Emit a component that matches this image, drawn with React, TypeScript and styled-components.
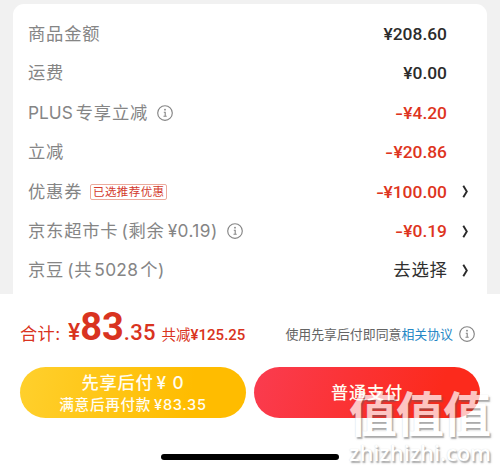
import React from 'react';
import styled, { createGlobalStyle } from 'styled-components';

const GlobalStyle = createGlobalStyle`
  * { box-sizing: border-box; }
  body { margin: 0; background: #fff; font-family: Inter, "Noto Sans CJK SC", sans-serif; }
`;

const Screen = styled.main`
  position: relative;
  width: 500px;
  height: 470px;
  overflow: hidden;
  display: flex;
  flex-direction: column;
  background: #fff;
`;

const Backdrop = styled.section`
  height: 294px;
  padding: 4px 13px 0;
  background: #f1f1f1;
`;

const Card = styled.div`
  height: 290px;
  padding: 10.4px 15px 0;
  border-radius: 11px 11px 0 0;
  background: #fff;
`;

const Row = styled.div`
  height: 39.4px;
  display: flex;
  align-items: center;
  white-space: nowrap;
  line-height: 24px;
`;

const Label = styled.div`
  display: flex;
  align-items: center;
  flex: 1;
  color: #858585;
  font-size: 17.3px;
`;

const Run = styled.span<{ $gap?: number; $ls?: number; $size?: number }>`
  margin-left: ${p => p.$gap ?? 0}px;
  letter-spacing: ${p => p.$ls ?? 0.8}px;
  font-size: ${p => (p.$size ? `${p.$size}px` : 'inherit')};
`;

const Price = styled.span<{ $red?: boolean }>`
  display: flex;
  color: ${p => (p.$red ? '#de3420' : '#2b2b2b')};
  font-family: Roboto, sans-serif;
  font-size: 17.4px;
  font-weight: 500;
`;

const Minus = styled.span`
  transform: scaleX(1.3);
  transform-origin: right;
`;

const Choice = styled.span`
  color: #2f2f2f;
  font-size: 17.4px;
  letter-spacing: 0.8px;
  margin-right: -0.8px;
`;

const Trail = styled.span`
  width: 25px;
  display: flex;
  padding-left: 15px;
`;

const Tag = styled.span`
  width: 77px;
  height: 16px;
  margin-left: 8px;
  display: flex;
  align-items: center;
  justify-content: center;
  border: 1px solid #ecaa9c;
  border-radius: 2px;
  color: #d3392b;
  font-size: 11.5px;
  letter-spacing: 0.4px;
`;

const InfoSvg = styled.svg<{ $gap: number }>`
  flex: none;
  margin-left: ${p => p.$gap}px;
`;

const Summary = styled.section`
  height: 73px;
  padding: 0 25px 0 20px;
  display: flex;
  justify-content: space-between;
  white-space: nowrap;
`;

const Total = styled.div`
  display: flex;
  align-items: baseline;
  color: #d93320;
  line-height: 67px;
`;

const Money = styled.span<{ $size: number; $weight?: number; $ls?: number; $gap?: number }>`
  font-family: Roboto, sans-serif;
  font-size: ${p => p.$size}px;
  font-weight: ${p => p.$weight ?? 500};
  letter-spacing: ${p => p.$ls ?? 0}px;
  margin-left: ${p => p.$gap ?? 0}px;
`;

const Terms = styled.div`
  height: 79px;
  display: flex;
  align-items: center;
  color: #646464;
  font-size: 12.9px;
`;

const Link = styled.span`
  color: #2587c5;
`;

const Actions = styled.div`
  display: flex;
  gap: 8px;
  padding-left: 20px;
`;

const PayButton = styled.button<{ $bg: string }>`
  width: 226px;
  height: 51px;
  padding: 0;
  border: 0;
  border-radius: 26px;
  display: flex;
  flex-direction: column;
  align-items: center;
  justify-content: center;
  background: ${p => p.$bg};
  color: #fffdf2;
  font-family: inherit;
  font-weight: 500;
  white-space: nowrap;
`;

const Line = styled.span<{ $size: number; $h: number }>`
  font-size: ${p => p.$size}px;
  line-height: ${p => p.$h}px;
  display: flex;
`;

const HomeBar = styled.div`
  width: 178px;
  height: 6px;
  margin: 35.5px 0 0 161px;
  border-radius: 3px;
  background: #000;
`;

const Watermark = styled.div`
  position: absolute;
  left: 349px;
  top: 384px;
  display: flex;
  flex-direction: column;
  white-space: nowrap;
  color: #fff;
  opacity: 0.72;
  text-shadow: 1.5px 1.5px 1.5px rgba(90, 90, 90, 0.7), 0 0 1px rgba(120, 120, 120, 0.4);
`;

const MarkName = styled.span`
  font-family: "Noto Sans CJK SC", sans-serif;
  font-size: 48px;
  font-weight: 700;
  line-height: 54px;
  letter-spacing: -1px;
`;

const MarkSite = styled.span`
  font-family: "Open Sans", sans-serif;
  font-size: 22px;
  font-weight: 600;
  line-height: 28px;
  letter-spacing: -0.1px;
`;

const Info = ({ gap }: { gap: number }) => (
  <InfoSvg $gap={gap} width="16" height="16" viewBox="0 0 16 16" fill="none" stroke="#858585">
    <circle cx="8" cy="8" r="7.3" strokeWidth="1.15" />
    <path d="M6.8 7.2H8.2V11M6.5 11.2H9.7" strokeWidth="1.1" />
    <circle cx="8" cy="4.7" r="0.9" fill="#858585" stroke="none" />
  </InfoSvg>
);

const Chevron = () => (
  <svg width="7" height="13" viewBox="0 0 7 13" fill="none">
    <path d="M1.3 .8L4.8 6.5L1.3 12.2" stroke="#292929" strokeWidth="1.9" />
  </svg>
);

const End = ({ arrow }: { arrow?: boolean }) => <Trail>{arrow && <Chevron />}</Trail>;

const Discount = ({ amount }: { amount: string }) => (
  <Price $red><Minus>-</Minus>¥{amount}</Price>
);

export default function App() {
  return (
    <>
      <GlobalStyle />
      <Screen>
        <Backdrop>
          <Card>
            <Row><Label><Run>商品金额</Run></Label><Price>¥208.60</Price><End /></Row>
            <Row><Label><Run>运费</Run></Label><Price>¥0.00</Price><End /></Row>
            <Row>
              <Label><Run $ls={0}>PLUS</Run><Run $gap={3}>专享立减</Run><Info gap={9} /></Label>
              <Discount amount="4.20" /><End />
            </Row>
            <Row><Label><Run>立减</Run></Label><Discount amount="20.86" /><End /></Row>
            <Row>
              <Label><Run>优惠券</Run><Tag>已选推荐优惠</Tag></Label>
              <Discount amount="100.00" /><End arrow />
            </Row>
            <Row>
              <Label>
                <Run>京东超市卡</Run><Run $gap={3}>(剩余</Run><Run $gap={3} $ls={0.4}>¥0.19)</Run><Info gap={9} />
              </Label>
              <Discount amount="0.19" /><End arrow />
            </Row>
            <Row>
              <Label><Run>京豆</Run><Run $gap={3}>(共</Run><Run $gap={2} $ls={0.3}>5028</Run><Run $gap={2} $ls={0.6}>个)</Run></Label>
              <Choice>去选择</Choice><End arrow />
            </Row>
          </Card>
        </Backdrop>
        <Summary>
          <Total>
            <Run $size={17.2} $ls={0.4}>合计:</Run>
            <Money $size={23} $gap={7.5}>¥</Money>
            <Money $size={38} $weight={700}>83</Money>
            <Money $size={22} $ls={0.2}>.35</Money>
            <Run $size={14.5} $gap={6} $ls={0}>共减</Run>
            <Money $size={15}>¥125.25</Money>
          </Total>
          <Terms>使用先享后付即同意<Link>相关协议</Link><Info gap={6} /></Terms>
        </Summary>
        <Actions>
          <PayButton $bg="linear-gradient(100deg, #ffd02d, #ffbc00 75%)">
            <Line $size={17.3} $h={25}><Run $ls={0.7}>先享后付</Run><Run $gap={3} $ls={0.9}>¥ 0</Run></Line>
            <Line $size={14.6} $h={20}><Run $ls={0.7}>满意后再付款</Run><Run $gap={3} $ls={0.7}>¥83.35</Run></Line>
          </PayButton>
          <PayButton $bg="linear-gradient(110deg, #fa3c50, #fc2a1c 80%)">
            <Line $size={17.2} $h={24}><Run>普通支付</Run></Line>
          </PayButton>
        </Actions>
        <HomeBar />
        <Watermark>
          <MarkName>值值值</MarkName>
          <MarkSite>zhizhizhi.com</MarkSite>
        </Watermark>
      </Screen>
    </>
  );
}
